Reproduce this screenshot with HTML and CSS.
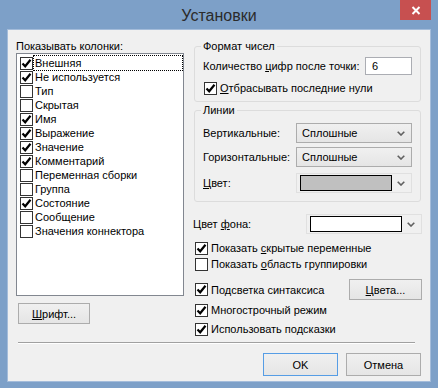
FILE: index.html
```html
<!DOCTYPE html>
<html lang="ru">
<head>
  <meta charset="UTF-8">
  <title>Установки</title>
  <link rel="stylesheet" href="styles.css">
</head>
<body>
  <div class="window">
    <div class="titlebar">
      <span class="title">Установки</span>
      <div class="close">
        <svg width="10" height="9" viewBox="0 0 10 9"><path d="M1.5 1 L8.5 8 M8.5 1 L1.5 8" stroke="#fff" stroke-width="2"/></svg>
      </div>
    </div>

    <div class="client">
      <div class="main">
        <div class="left">
          <div class="label">Показывать колонки:</div>
          <div class="listbox">
            <div class="item"><span class="cb on"></span><span class="text focus">Внешняя</span></div>
            <div class="item"><span class="cb on"></span><span class="text">Не используется</span></div>
            <div class="item"><span class="cb"></span><span class="text">Тип</span></div>
            <div class="item"><span class="cb"></span><span class="text">Скрытая</span></div>
            <div class="item"><span class="cb on"></span><span class="text">Имя</span></div>
            <div class="item"><span class="cb on"></span><span class="text">Выражение</span></div>
            <div class="item"><span class="cb on"></span><span class="text">Значение</span></div>
            <div class="item"><span class="cb on"></span><span class="text">Комментарий</span></div>
            <div class="item"><span class="cb"></span><span class="text">Переменная сборки</span></div>
            <div class="item"><span class="cb"></span><span class="text">Группа</span></div>
            <div class="item"><span class="cb on"></span><span class="text">Состояние</span></div>
            <div class="item"><span class="cb"></span><span class="text">Сообщение</span></div>
            <div class="item"><span class="cb"></span><span class="text">Значения коннектора</span></div>
          </div>
          <button class="btn font-btn"><u>Ш</u>рифт...</button>
        </div>

        <div class="right">
          <fieldset class="group">
            <legend>Формат чисел</legend>
            <div class="row first">
              <span>Количество <u>ц</u>ифр после точки:</span>
              <div class="textbox">6</div>
            </div>
            <div class="check digits"><span class="cb on"></span><span><u>О</u>тбрасывать последние нули</span></div>
          </fieldset>

          <fieldset class="group lines">
            <legend>Линии</legend>
            <div class="row first">
              <span>Вертикальные:</span>
              <div class="select"><span>Сплошные</span><span class="chevron"></span></div>
            </div>
            <div class="row second">
              <span>Горизонтальные:</span>
              <div class="select"><span>Сплошные</span><span class="chevron"></span></div>
            </div>
            <div class="row third">
              <span><u>Ц</u>вет:</span>
              <div class="colorcombo"><span class="swatch gray"></span><span class="chevron"></span></div>
            </div>
          </fieldset>

          <div class="row bg-row">
            <span>Цвет <u>ф</u>она:</span>
            <div class="colorcombo"><span class="swatch"></span><span class="chevron"></span></div>
          </div>

          <div class="check hidden-vars"><span class="cb on"></span><span>Показать <u>с</u>крытые переменные</span></div>
          <div class="check group-area"><span class="cb"></span><span>Показать <u>о</u>бласть группировки</span></div>
          <div class="row syntax-row">
            <div class="check"><span class="cb on"></span><span>Подсветка синтаксиса</span></div>
            <button class="btn colors-btn"><u>Ц</u>вета...</button>
          </div>
          <div class="check multiline"><span class="cb on"></span><span>Многострочный режим</span></div>
          <div class="check hints"><span class="cb on"></span><span>Использовать подсказки</span></div>
        </div>
      </div>

      <div class="separator"></div>

      <div class="footer">
        <button class="btn dialog-btn default">OK</button>
        <button class="btn dialog-btn">Отмена</button>
      </div>
    </div>
  </div>
</body>
</html>
```

FILE: styles.css
```css
* {
  box-sizing: border-box;
}

body {
  margin: 0;
  font-family: 'Liberation Sans', Arial, sans-serif;
  font-size: 11px;
  line-height: 14px;
  color: #000;
  white-space: nowrap;
}

u {
  text-decoration: underline;
  text-underline-offset: 1px;
}

.window {
  width: 438px;
  height: 388px;
  background-color: #7da0c8;
  display: flex;
  flex-direction: column;
}

.titlebar {
  height: 30px;
  flex: none;
  display: grid;
  grid-template-columns: 1fr auto 1fr;
}

.title {
  grid-column: 2;
  font-size: 16px;
  line-height: 31px;
  color: #2b2b2b;
}

.close {
  grid-column: 3;
  justify-self: end;
  width: 31px;
  height: 20px;
  margin-right: 7px;
  background-color: #c75050;
  display: flex;
  align-items: center;
  justify-content: center;
}

.client {
  flex: 1;
  margin: 0 8px 7px;
  padding: 9px 8px 0;
  background-color: #f0f0f0;
  box-shadow: 0 0 0 1px #a4bcda;
}

.main {
  display: flex;
  gap: 9px;
  height: 303px;
}

/* left column */

.left {
  width: 168px;
  display: flex;
  flex-direction: column;
}

.listbox {
  height: 243px;
  border: 1px solid #828790;
  background-color: #fff;
  padding: 2px 1px 0 3px;
}

.item {
  display: flex;
  align-items: center;
  gap: 1px;
  height: 14px;
}

.item .text {
  padding: 0 1px;
}

.item .focus {
  flex: 1;
  outline: 1px dotted #000;
}

.cb {
  width: 13px;
  height: 13px;
  flex: none;
  border: 1px solid #333;
  background-color: #fff;
  background-repeat: no-repeat;
  background-position: center;
}

.cb.on {
  background-image: url("data:image/svg+xml,%3Csvg xmlns='http://www.w3.org/2000/svg' width='11' height='11' viewBox='0 0 11 11'%3E%3Cpath d='M1.5 5.5 L4.2 8.3 L9.5 1.8' fill='none' stroke='%23000' stroke-width='2.2'/%3E%3C/svg%3E");
}

.btn {
  font: inherit;
  color: #000;
  height: 21px;
  padding: 0;
  border: 1px solid #acacac;
  border-radius: 0;
  background: linear-gradient(#f0f0f0, #e5e5e5);
}

.font-btn {
  width: 72px;
  margin: 7px 0 0 2px;
}

/* right column */

.right {
  width: 229px;
  display: flex;
  flex-direction: column;
}

.group {
  margin: 0 1px;
  padding: 0 8px 6px;
  border: 1px solid #dcdcdc;
  border-radius: 3px;
  min-width: 0;
}

.group legend {
  padding: 0 2px;
  margin-left: -2px;
}

.group.lines {
  margin-top: 1px;
  padding-bottom: 8px;
}

.row {
  display: flex;
  align-items: center;
  justify-content: space-between;
}

.group .first {
  margin-top: 4px;
}

.lines .first {
  margin-top: 6px;
}

.lines .second {
  margin-top: 4px;
}

.lines .third {
  margin-top: 6px;
}

.textbox {
  width: 47px;
  height: 18px;
  border: 1px solid #abadb3;
  background-color: #fff;
  padding: 1px 6px;
}

.check {
  display: flex;
  align-items: center;
  gap: 3px;
  height: 14px;
}

.digits {
  margin-top: 6px;
  margin-left: 1px;
}

.select {
  width: 116px;
  height: 20px;
  border: 1px solid #acacac;
  background: linear-gradient(#f0f0f0, #e5e5e5);
  display: flex;
  align-items: center;
  justify-content: space-between;
  padding: 0 6px 0 5px;
}

.chevron {
  width: 8px;
  height: 5px;
  background-image: url("data:image/svg+xml,%3Csvg xmlns='http://www.w3.org/2000/svg' width='8' height='5' viewBox='0 0 8 5'%3E%3Cpath d='M0.7 0.7 L4 4 L7.3 0.7' fill='none' stroke='%23606060' stroke-width='1.6'/%3E%3C/svg%3E");
}

.colorcombo {
  width: 116px;
  height: 20px;
  border: 1px solid #e0e0e0;
  display: flex;
  align-items: center;
  justify-content: space-between;
  padding: 0 6px 0 3px;
}

.swatch {
  width: 92px;
  height: 16px;
  border: 1px solid #000;
  background-color: #fff;
}

.swatch.gray {
  background-color: #c0c0c0;
}

.bg-row {
  margin-top: 12px;
}

.right > .check {
  margin-left: 2px;
}

.hidden-vars {
  margin-top: 7px;
}

.group-area {
  margin-top: 2px;
}

.syntax-row {
  margin: 8px 0 0 2px;
}

.colors-btn {
  width: 73px;
}

.multiline {
  margin-top: 3px;
}

.hints {
  margin-top: 5px;
}

/* footer */

.separator {
  height: 2px;
  margin: 0 7px 0 2px;
  border-top: 1px solid #a0a0a0;
  border-bottom: 1px solid #fff;
}

.footer {
  display: flex;
  justify-content: flex-end;
  gap: 8px;
  margin: 9px 1px 0 0;
}

.dialog-btn {
  width: 75px;
  height: 23px;
}

.dialog-btn.default {
  border-color: #569de5;
}
```
